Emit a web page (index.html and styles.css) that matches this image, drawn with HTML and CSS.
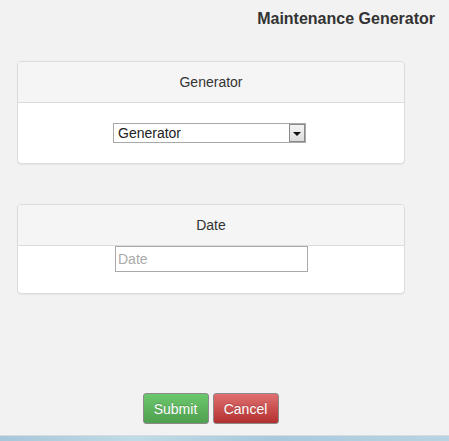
FILE: index.html
```html
<!DOCTYPE html>
<html>
<head>
<meta charset="utf-8">
<link rel="stylesheet" href="styles.css">
</head>
<body>
<div class="page">
  <h1 class="title">Maintenance Generator</h1>
  <div class="content">
    <div class="panel panel-gen">
      <div class="panel-heading">Generator</div>
      <div class="panel-body body-gen">
        <div class="select-wrap">
          <select class="select">
            <option>Generator</option>
          </select>
          <span class="select-arrow"><span class="tri"></span></span>
        </div>
      </div>
    </div>
    <div class="panel panel-date">
      <div class="panel-heading">Date</div>
      <div class="panel-body body-date">
        <input class="date-input" type="text" placeholder="Date">
      </div>
    </div>
    <div class="actions">
      <button class="btn btn-success">Submit</button>
      <button class="btn btn-danger">Cancel</button>
    </div>
  </div>
</div>
<div class="desktop-strip"></div>
</body>
</html>
```

FILE: styles.css
```css
html, body {
  margin: 0;
  padding: 0;
  height: 100%;
}
body {
  background: #f2f2f2;
  font-family: "Liberation Sans", Arial, sans-serif;
  color: #333;
  display: flex;
  flex-direction: column;
  overflow: hidden;
}
.page {
  flex: 1;
  display: flex;
  flex-direction: column;
}
.title {
  margin: 0;
  padding: 9px 14px 0 0;
  height: 19px;
  font-size: 16px;
  font-weight: bold;
  line-height: 19px;
  text-align: right;
  color: #333;
}
.content {
  width: 388px;
  margin-left: 17px;
  padding-top: 33px;
  display: flex;
  flex-direction: column;
}
.panel {
  background: #fff;
  border: 1px solid #dcdcdc;
  border-radius: 4px;
  box-shadow: 0 1px 1px rgba(0,0,0,0.05);
  overflow: hidden;
}
.panel-heading {
  height: 40px;
  line-height: 40px;
  background: #f5f5f5;
  border-bottom: 1px solid #dcdcdc;
  text-align: center;
  font-size: 14px;
  color: #333;
}
.panel-date {
  margin-top: 40px;
}
.panel-body {
  display: flex;
  justify-content: center;
}
.body-gen {
  padding: 20px 0 20px;
}
.select-wrap {
  position: relative;
  width: 193px;
  height: 20px;
  margin-right: 3px;
}
.select {
  -webkit-appearance: none;
  appearance: none;
  box-sizing: border-box;
  width: 193px;
  height: 20px;
  margin: 0;
  padding: 0 0 0 4px;
  border: 1px solid #a9a9a9;
  border-radius: 0;
  background: #fff;
  font-family: "Liberation Sans", Arial, sans-serif;
  font-size: 14px;
  line-height: 18px;
  color: #222;
  outline: none;
}
.select-arrow {
  position: absolute;
  top: 1px;
  right: 1px;
  width: 16px;
  height: 18px;
  box-sizing: border-box;
  border: 1px solid #8a8a8a;
  background: linear-gradient(#f4f4f4, #dcdcdc);
  display: flex;
  align-items: center;
  justify-content: center;
  pointer-events: none;
}
.tri {
  width: 0;
  height: 0;
  border-left: 4px solid transparent;
  border-right: 4px solid transparent;
  border-top: 4px solid #111;
  margin-top: 1px;
}
.body-date {
  padding: 0 0 21px;
}
.date-input {
  box-sizing: border-box;
  width: 193px;
  height: 26px;
  margin: 0 0 0 1px;
  padding: 0 0 0 2px;
  border: 1px solid #a9a9a9;
  border-radius: 0;
  background: #fff;
  font-family: "Liberation Sans", Arial, sans-serif;
  font-size: 14px;
  color: #333;
  outline: none;
}
.date-input::placeholder {
  color: #aaa;
}
.actions {
  margin-top: 99px;
  padding-right: 1px;
  display: flex;
  justify-content: center;
  gap: 4px;
}
.btn {
  box-sizing: border-box;
  width: 66px;
  height: 31px;
  border: 1px solid #8a8a8a;
  border-radius: 3px;
  font-family: "Liberation Sans", Arial, sans-serif;
  font-size: 14px;
  color: #fff;
  text-shadow: 0 -1px 0 rgba(0,0,0,0.2);
  padding: 0;
  cursor: pointer;
}
.btn-success {
  background: linear-gradient(#6cc86c, #4f9f4f);
}
.btn-danger {
  background: linear-gradient(#e07070, #b32f2f);
}
.desktop-strip {
  height: 5px;
  background: linear-gradient(90deg, #a7c6d9, #c1dbe6 30%, #a9c9dc 60%, #b8d4e2);
  border-top: 1px solid #d5dde2;
}
```
